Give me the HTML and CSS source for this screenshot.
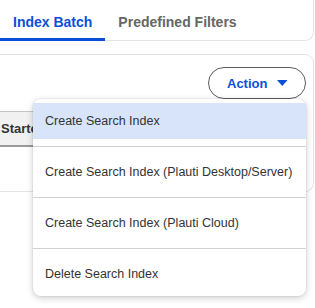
FILE: index.html
```html
<!DOCTYPE html>
<html>
<head>
<meta charset="utf-8">
<link rel="stylesheet" href="styles.css">
</head>
<body>
<div class="tabs-card">
  <div class="tab active">Index Batch</div>
  <div class="tab">Predefined Filters</div>
</div>
<div class="panel">
  <div class="toolbar">
    <div class="action-wrap">
      <button class="action-btn">Action
        <svg class="caret" width="11" height="6" viewBox="0 0 11 6"><path d="M0 0H11L5.5 6Z" fill="#0b4fd6"/></svg>
      </button>
      <div class="menu">
        <div class="item hover">Create Search Index</div>
        <div class="sep"></div>
        <div class="item">Create Search Index (Plauti Desktop/Server)</div>
        <div class="sep"></div>
        <div class="item">Create Search Index (Plauti Cloud)</div>
        <div class="sep"></div>
        <div class="item">Delete Search Index</div>
      </div>
    </div>
  </div>
  <div class="row">
    <button class="gray-btn">Started</button>
  </div>
</div>
</body>
</html>
```
FILE: styles.css
```css
html, body {
  margin: 0;
  padding: 0;
  background: #fff;
  font-family: "Liberation Sans", Arial, sans-serif;
}
body {
  min-height: 308px;
}
.tabs-card {
  display: flex;
  width: 314px;
  box-sizing: border-box;
  border: 1px solid #e3e3e3;
  border-left: none;
  border-top: none;
  border-radius: 0 0 9px 0;
}
.tab {
  padding: 14px 13px 8px 13px;
  line-height: 16px;
  font-size: 14px;
  font-weight: bold;
  color: #666;
  border-bottom: 3px solid transparent;
  margin-bottom: -1px;
}
.tab.active {
  color: #0b4fd6;
  border-bottom-color: #0b4fd6;
}
.panel {
  margin-top: 13px;
  width: 314px;
  box-sizing: border-box;
  border: 1px solid #e3e3e3;
  border-left: none;
  border-radius: 0 9px 9px 0;
  padding: 12px 0 44px 0;
}
.toolbar {
  display: flex;
  justify-content: flex-end;
  padding-right: 7px;
}
.action-wrap {
  position: relative;
}
.action-btn {
  display: flex;
  align-items: center;
  gap: 10px;
  height: 32px;
  width: 98px;
  box-sizing: border-box;
  padding: 0 17px 0 18px;
  border: 1px solid #5c5c5c;
  border-radius: 16px;
  background: #fff;
  font-family: "Liberation Sans", Arial, sans-serif;
  font-size: 13px;
  font-weight: bold;
  color: #0b4fd6;
}
.caret {
  display: block;
}
.menu {
  position: absolute;
  top: 32px;
  right: 0;
  width: 273px;
  box-sizing: border-box;
  padding: 4px 0;
  background: #fff;
  border-radius: 8px;
  box-shadow: 0 2px 7px rgba(0, 0, 0, 0.2), 0 0 0 1px rgba(0, 0, 0, 0.04);
  z-index: 2;
}
.item {
  height: 36px;
  line-height: 36px;
  padding-left: 12px;
  font-size: 12.5px;
  color: #333;
  white-space: nowrap;
}
.item.hover {
  background: #d7e4fa;
}
.sep {
  height: 1px;
  background: #d2d2d2;
  margin: 7px 0 7px 0;
}
.row {
  margin-top: 12px;
  margin-left: -6px;
}
.gray-btn {
  height: 36px;
  padding: 0 14px 0 6px;
  border: 1px solid #c4c4c4;
  border-bottom: 2px solid #9a9a9a;
  border-radius: 3px;
  background: #f1f1f1;
  font-family: "Liberation Sans", Arial, sans-serif;
  font-size: 13px;
  font-weight: bold;
  color: #333;
}
```
